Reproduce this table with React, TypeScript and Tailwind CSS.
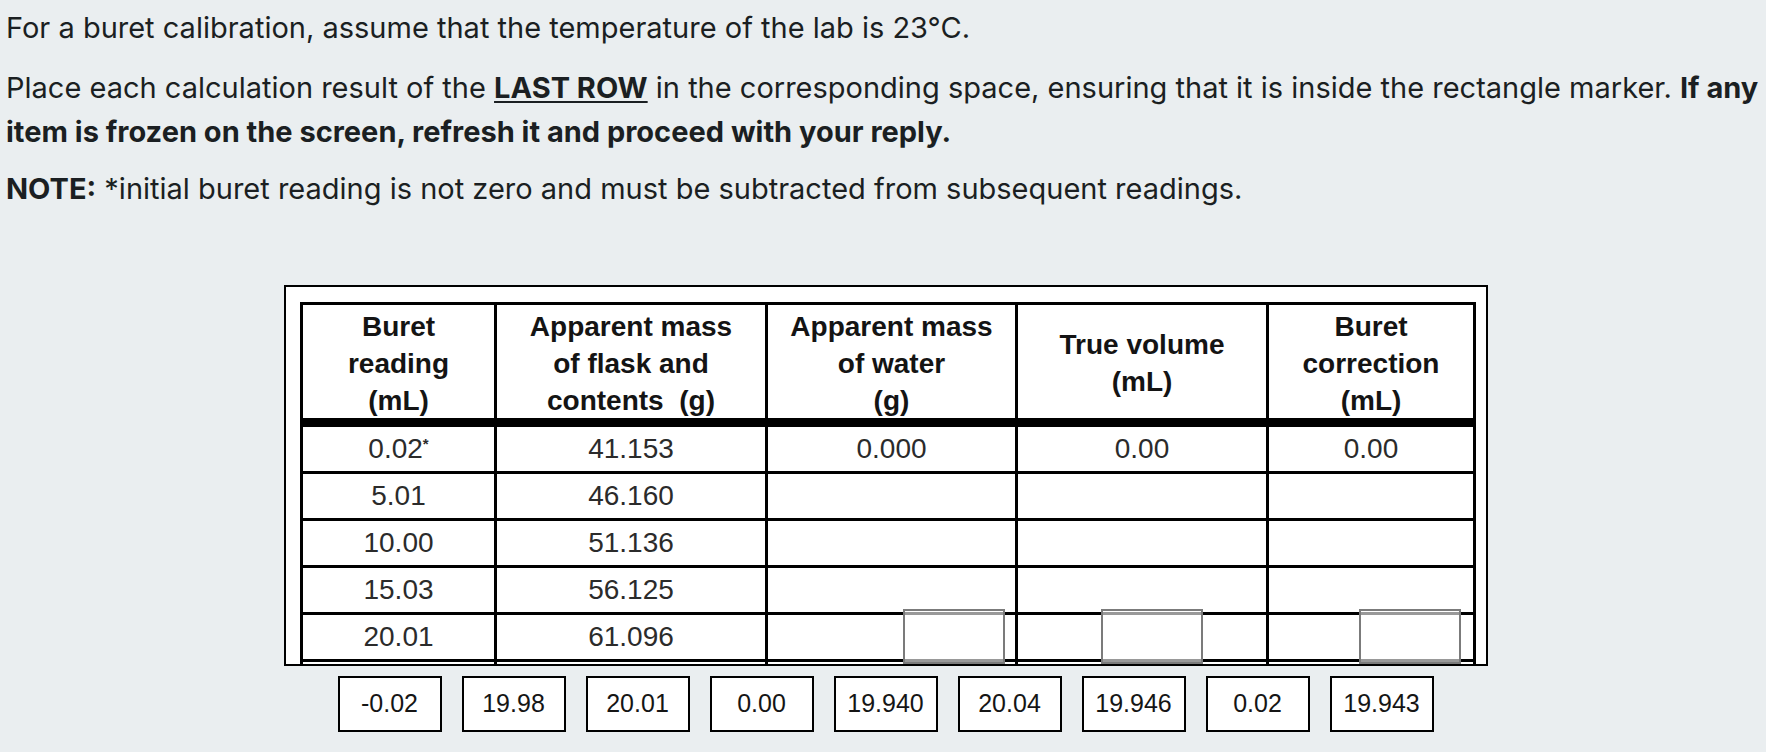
import React from "react";

const headers = [
  ["Buret", "reading", "(mL)"],
  ["Apparent mass", "of flask and", "contents\u00a0\u00a0(g)"],
  ["Apparent mass", "of water", "(g)"],
  ["True volume", "(mL)"],
  ["Buret", "correction", "(mL)"],
];

const rows = [
  ["0.02", "41.153", "0.000", "0.00", "0.00"],
  ["5.01", "46.160", "", "", ""],
  ["10.00", "51.136", "", "", ""],
  ["15.03", "56.125", "", "", ""],
  ["20.01", "61.096", "", "", ""],
  ["", "", "", "", ""],
];

const answers = ["-0.02", "19.98", "20.01", "0.00", "19.940", "20.04", "19.946", "0.02", "19.943"];

// marker rectangles sit over the last row of the picture
const markers = ["left-[617px]", "left-[815px]", "left-[1073px]"];

export default function App() {
  return (
    <div className="min-h-screen bg-[#eaeef0] text-[#1b1f22] font-['Inter',sans-serif]">
      <div className="px-[6px] pt-[6px] text-[29px] leading-[44px]">
        <p>For a buret calibration, assume that the temperature of the lab is 23°C.</p>
        <p className="mt-4">
          Place each calculation result of the <b className="underline underline-offset-[3px]">LAST ROW</b> in the
          corresponding space, ensuring that it is inside the rectangle marker. <b>If any</b>
          <br />
          <b>item is frozen on the screen, refresh it and proceed with your reply.</b>
        </p>
        <p className="mt-[13px]">
          <b>NOTE:</b> *initial buret reading is not zero and must be subtracted from subsequent readings.
        </p>
      </div>

      <div className="mt-[74px] flex justify-center pl-[6px]">
        <div className="relative h-[381px] w-[1204px] overflow-hidden border-2 border-black bg-white pl-[14px] pt-[15px]">
          <div
            className="grid w-[1176px] grid-cols-[191px_268px_247px_248px_204px] gap-[3px] bg-black p-[3px] font-['Liberation_Sans',Arial,sans-serif] text-[28px]"
          >
            {headers.map((h, i) => (
              <div
                key={i}
                className="flex h-[119px] flex-col items-center justify-center border-b-[6px] border-black bg-white pt-[3px] font-bold leading-[37px] text-[#141414]"
              >
                {h.map((line, j) => (
                  <span key={j} className="whitespace-pre">{line}</span>
                ))}
              </div>
            ))}
            {rows.map((r, i) =>
              r.map((c, j) => (
                <div key={i + "-" + j} className="flex h-[44px] items-center justify-center bg-white text-[#2b2b2b]">
                  {c}
                  {i === 0 && j === 0 && <span className="mb-[10px] text-[15px] font-bold">*</span>}
                </div>
              ))
            )}
          </div>
          {markers.map((m) => (
            <div
              key={m}
              className={"absolute bottom-0 h-[55px] w-[102px] border-2 border-[#7b7b7b] bg-white/60 " + m}
            />
          ))}
        </div>
      </div>

      <div className="mt-[10px] flex justify-center gap-5 pl-[5px] font-['Liberation_Sans',Arial,sans-serif] text-[25px] text-[#151515]">
        {answers.map((a, i) => (
          <div key={i} className="flex h-[56px] w-[104px] items-center justify-center border-2 border-black bg-white">
            {a}
          </div>
        ))}
      </div>
    </div>
  );
}
